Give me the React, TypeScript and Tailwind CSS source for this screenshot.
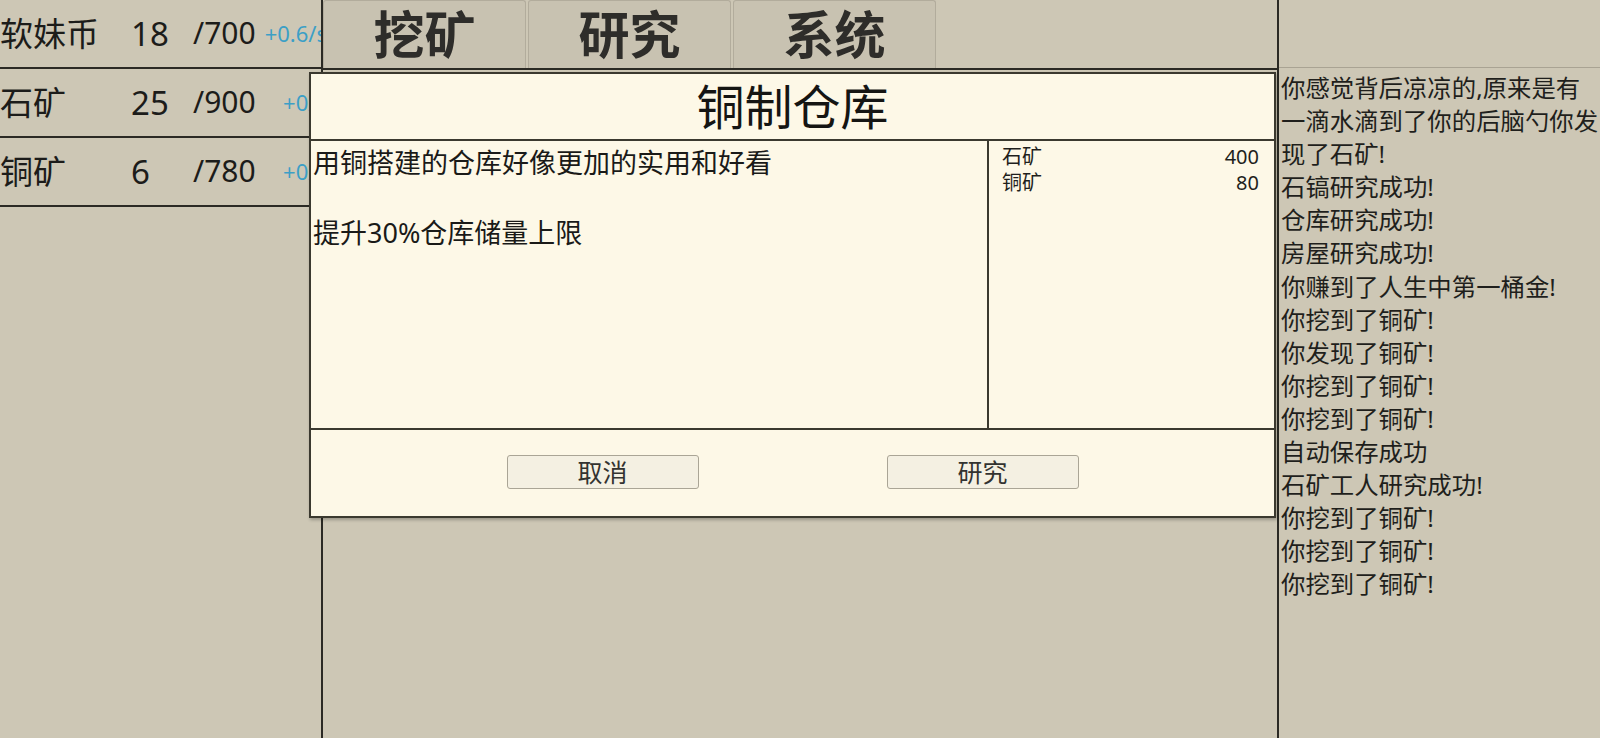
import React from "react";

const resources = [
  { name: "软妹币", value: "18", max: "/700", rate: "+0.6/s" },
  { name: "石矿", value: "25", max: "/900", rate: "+0/s" },
  { name: "铜矿", value: "6", max: "/780", rate: "+0/s" },
];

const tabs = ["挖矿", "研究", "系统"];

const logs = [
  "你感觉背后凉凉的,原来是有一滴水滴到了你的后脑勺你发现了石矿!",
  "石镐研究成功!",
  "仓库研究成功!",
  "房屋研究成功!",
  "你赚到了人生中第一桶金!",
  "你挖到了铜矿!",
  "你发现了铜矿!",
  "你挖到了铜矿!",
  "你挖到了铜矿!",
  "自动保存成功",
  "石矿工人研究成功!",
  "你挖到了铜矿!",
  "你挖到了铜矿!",
  "你挖到了铜矿!",
];

const costs = [
  { name: "石矿", amount: "400" },
  { name: "铜矿", amount: "80" },
];

export default function App() {
  return (
    <div className="relative flex h-[738px] w-[1600px] overflow-hidden bg-[#cdc7b5] font-['Noto_Sans','Noto_Sans_CJK_SC',sans-serif] text-[#1c1c1a]">
      {/* Left resources column */}
      <div className="w-[321px] shrink-0 overflow-hidden">
        <div className="w-[327px]">
          {resources.map((r) => (
            <div
              key={r.name}
              className="flex h-[69px] items-center border-b-2 border-[#2b2a24] pb-[1px] whitespace-nowrap"
            >
              <span className="w-[131px] text-[33px] leading-none">{r.name}</span>
              <span className="w-[62px] text-[33px] leading-none">{r.value}</span>
              <span className="text-[30px] leading-none">{r.max}</span>
              <span className="ml-auto text-[22px] leading-none text-[#3c9fc6]">{r.rate}</span>
            </div>
          ))}
        </div>
      </div>

      {/* Middle column */}
      <div className="flex w-[958px] shrink-0 flex-col border-x-2 border-[#2b2a24]">
        <div className="flex h-[70px] gap-[2px] border-b-2 border-[#2b2a24]">
          {tabs.map((t) => (
            <div
              key={t}
              className="flex h-[68px] w-[203px] items-center justify-center rounded-t-[3px] border border-b-0 border-[#b2ac9c] bg-[#c8c2b1] text-[51px] font-bold leading-none text-[#2e2d2a]"
            >
              {t}
            </div>
          ))}
        </div>
        <div className="flex-1" />
      </div>

      {/* Right log column */}
      <div className="flex w-[321px] shrink-0 flex-col">
        <div className="h-[68px] border-b border-[#a9a393]" />
        <div className="pl-[2px] pt-[3px] text-[24.4px] leading-[33.1px] text-[#1f1f1c]">
          {logs.map((l, i) => (
            <div key={i}>{l}</div>
          ))}
        </div>
      </div>

      {/* Modal dialog */}
      <div className="absolute left-[309px] top-[72px] flex h-[446px] w-[967px] flex-col border-2 border-[#3b392f] bg-[#fdf8e7] shadow-[1px_2px_3px_rgba(0,0,0,0.25)]">
        <div className="flex h-[67px] shrink-0 items-center justify-center border-b-2 border-[#3b392f] text-[48px] leading-none text-[#151513]">
          铜制仓库
        </div>
        <div className="flex h-[289px] shrink-0 border-b-2 border-[#3b392f]">
          <div className="w-[678px] shrink-0 border-r-2 border-[#3b392f] pl-[2px] pt-[4px] text-[27px] leading-[35px] text-[#1a1a18]">
            <div>用铜搭建的仓库好像更加的实用和好看</div>
            <div>&nbsp;</div>
            <div>提升30%仓库储量上限</div>
          </div>
          <div className="flex-1 pl-[13px] pr-[15px] pt-[3px] text-[20px] leading-[26px] text-[#1f1f1c]">
            {costs.map((c) => (
              <div key={c.name} className="flex justify-between">
                <span>{c.name}</span>
                <span>{c.amount}</span>
              </div>
            ))}
          </div>
        </div>
        <div className="flex flex-1 justify-center gap-[188px] pt-[25px]">
          <button className="flex h-[34px] w-[192px] items-center justify-center rounded-[3px] border border-[#aaa596] bg-[#f4f0e2] text-[25px] leading-none text-[#333330]">
            取消
          </button>
          <button className="flex h-[34px] w-[192px] items-center justify-center rounded-[3px] border border-[#aaa596] bg-[#f4f0e2] text-[25px] leading-none text-[#333330]">
            研究
          </button>
        </div>
      </div>
    </div>
  );
}
